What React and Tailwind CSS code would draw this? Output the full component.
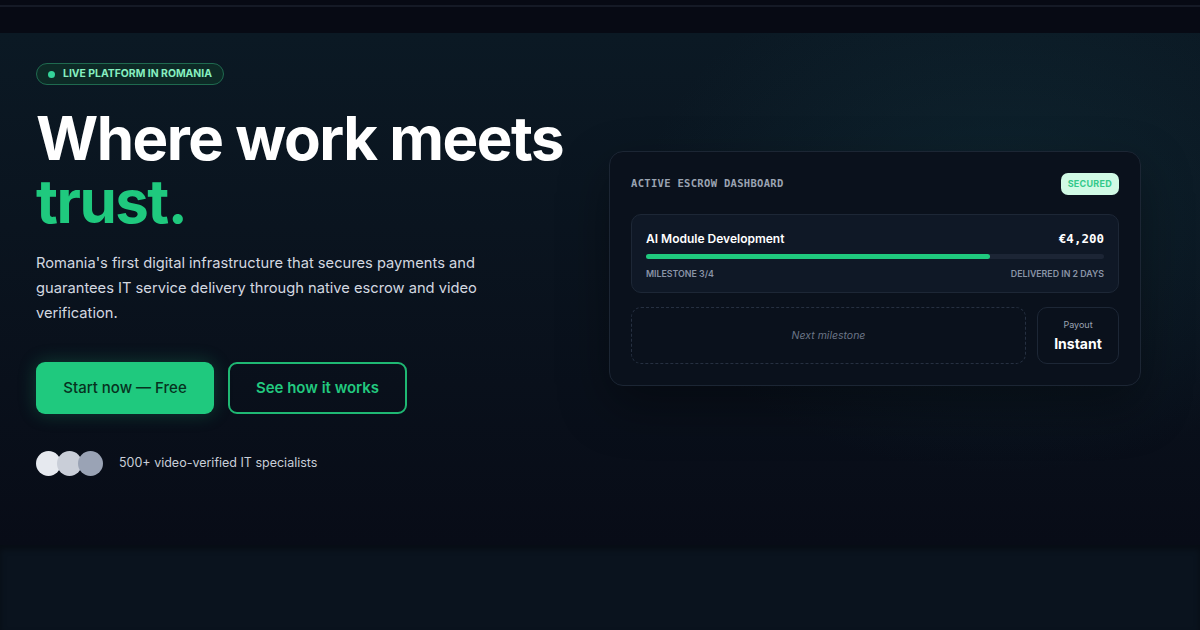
export default function App() {
  return (
    <div className="min-h-screen bg-[#0a121d] font-['Inter','Liberation_Sans',sans-serif]">
      {/* top strip */}
      <div className="h-[33px] bg-[#070a14]">
        <div className="h-[5px]" />
        <div className="h-[2px] bg-[#151a26]" />
      </div>

      {/* Hero */}
      <section className="relative h-[512px] overflow-hidden bg-gradient-to-b from-[#0b1924] to-[#080c17]">
        <div className="pointer-events-none absolute -right-40 -top-20 h-[520px] w-[720px] rounded-full bg-[radial-gradient(closest-side,rgba(20,60,70,0.35),transparent)]" />
        <div className="relative flex h-full items-start justify-between pl-9 pr-[59px] pt-[30px]">
          {/* Left column */}
          <div className="w-[560px]">
            <div className="flex">
              <div className="flex h-[22px] items-center gap-[8px] rounded-full border border-[#1f6a4f] bg-[#0d2a26] px-[11px]">
                <span className="h-[7px] w-[7px] rounded-full bg-[#34d399]" />
                <span className="text-[10.4px] font-bold text-[#86efc0]">LIVE PLATFORM IN ROMANIA</span>
              </div>
            </div>

            <h1 className="mt-[22px] whitespace-nowrap text-[60px] font-bold leading-[63px] tracking-[-0.025em] text-white">
              Where work meets
              <br />
              <span className="text-[#1fc97e]">trust.</span>
            </h1>

            <p className="mt-[18px] w-[480px] text-[14.7px] leading-[25px] text-[#d3d8e0]">
              Romania's first digital infrastructure that secures payments and guarantees IT service delivery through native escrow and video verification.
            </p>

            <div className="mt-[36px] flex gap-[14px]">
              <button className="h-[52px] w-[178px] rounded-[9px] bg-[#1fc97e] text-[15px] font-medium text-[#07321f] shadow-[0_0_18px_rgba(31,201,126,0.25)]">
                Start now — Free
              </button>
              <button className="h-[52px] w-[179px] rounded-[9px] border-2 border-[#1fb873] text-[15px] font-semibold text-[#22c97f]">
                See how it works
              </button>
            </div>

            <div className="mt-[37px] flex items-center">
              <div className="flex">
                <span className="h-[25px] w-[25px] rounded-full bg-[#e6e9ef]" />
                <span className="-ml-[4px] h-[25px] w-[25px] rounded-full bg-[#c9ced8]" />
                <span className="-ml-[4px] h-[25px] w-[25px] rounded-full bg-[#9aa3b5]" />
              </div>
              <span className="ml-[16px] text-[12.5px] text-[#c8ced8]">500+ video-verified IT specialists</span>
            </div>
          </div>

          {/* Dashboard card */}
          <div className="mt-[88px] w-[532px] rounded-[14px] border border-[#1c2634] bg-[#0a111c] p-[21px] shadow-[0_20px_50px_rgba(0,0,0,0.35)]">
            <div className="flex items-center justify-between">
              <span className="font-['DejaVu_Sans_Mono','Liberation_Mono',monospace] text-[10.5px] font-semibold tracking-[0.03em] text-[#9aa3b2]">
                ACTIVE ESCROW DASHBOARD
              </span>
              <span className="rounded-[7px] bg-[#d1fae5] px-[7px] py-[4px] text-[9px] font-bold tracking-[0.03em] text-[#34c98a]">
                SECURED
              </span>
            </div>

            <div className="mt-[19px] rounded-[10px] border border-[#1d2736] bg-[#0f1826] px-[14px] pb-[12px] pt-[15px]">
              <div className="flex items-center justify-between">
                <span className="text-[12px] font-semibold text-white">AI Module Development</span>
                <span className="font-['DejaVu_Sans_Mono','Liberation_Mono',monospace] text-[12.5px] font-semibold text-white">€4,200</span>
              </div>
              <div className="mt-[6px] h-[5px] w-full rounded-full bg-[#1c2535]">
                <div className="h-full w-[75%] rounded-full bg-[#1fc97e]" />
              </div>
              <div className="mt-[8px] flex items-center justify-between text-[8.8px] font-semibold text-[#8a94a6]">
                <span>MILESTONE 3/4</span>
                <span>DELIVERED IN 2 DAYS</span>
              </div>
            </div>

            <div className="mt-[14px] flex gap-[11px]">
              <div className="flex h-[57px] flex-1 items-center justify-center rounded-[10px] border border-dashed border-[#263041]">
                <span className="text-[10.5px] italic text-[#6b7587]">Next milestone</span>
              </div>
              <div className="flex h-[57px] w-[82px] flex-col items-center justify-center rounded-[10px] border border-[#1d2736]">
                <span className="text-[9px] text-[#9aa3b2]">Payout</span>
                <span className="mt-[2px] text-[14px] font-bold text-white">Instant</span>
              </div>
            </div>
          </div>
        </div>
      </section>

      {/* below hero */}
      <div className="h-[85px] bg-[#0a131e] shadow-[inset_0_4px_6px_rgba(0,0,0,0.35)]" />
    </div>
  );
}
